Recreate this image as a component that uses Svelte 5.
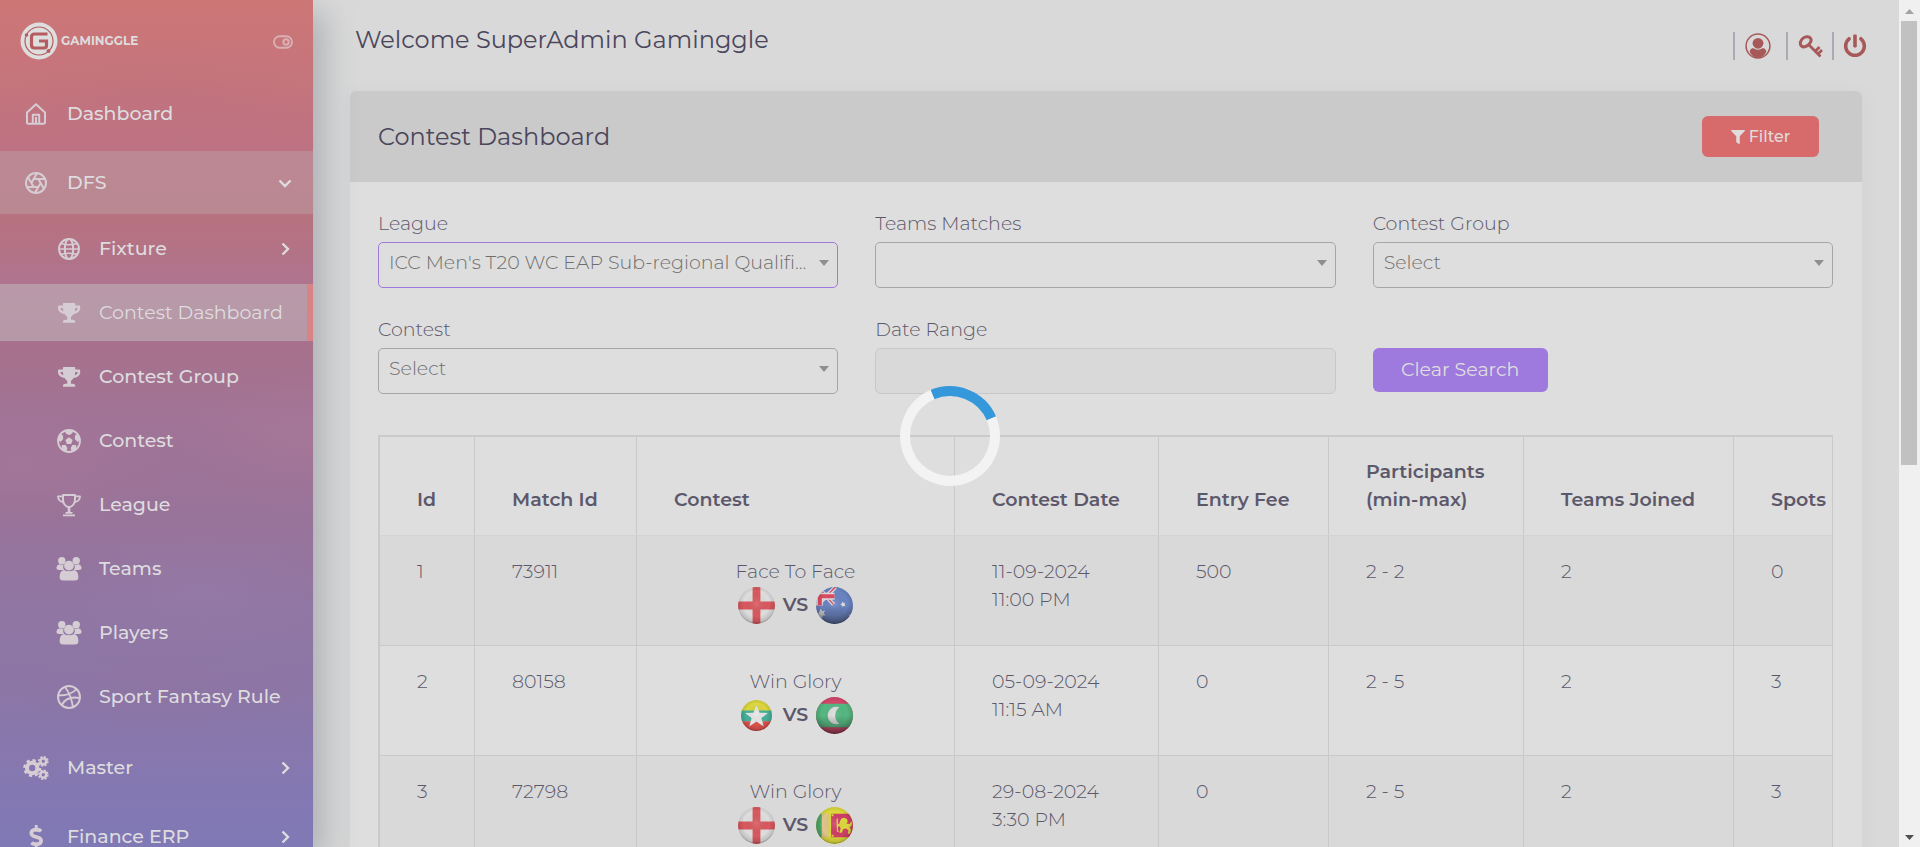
<script>
  const subItems = [
    { label: 'Fixture', icon: 'globe', arrow: true },
    { label: 'Contest Dashboard', icon: 'cup', active: true },
    { label: 'Contest Group', icon: 'cup' },
    { label: 'Contest', icon: 'ball' },
    { label: 'League', icon: 'trophy' },
    { label: 'Teams', icon: 'group' },
    { label: 'Players', icon: 'group' },
    { label: 'Sport Fantasy Rule', icon: 'dribbble' }
  ];

  const columns = [
    { label: 'Id', width: 95 },
    { label: 'Match Id', width: 162 },
    { label: 'Contest', width: 318 },
    { label: 'Contest Date', width: 204 },
    { label: 'Entry Fee', width: 170 },
    { label: 'Participants (min-max)', width: 195 },
    { label: 'Teams Joined', width: 210 },
    { label: 'Spots', width: 150 }
  ];

  const rows = [
    { id: 1, match: 73911, name: 'Face To Face', home: 'england', away: 'australia', date: '11-09-2024', time: '11:00 PM', fee: 500, range: '2 - 2', joined: 2, spots: 0 },
    { id: 2, match: 80158, name: 'Win Glory', home: 'myanmar', away: 'maldives', date: '05-09-2024', time: '11:15 AM', fee: 0, range: '2 - 5', joined: 2, spots: 3 },
    { id: 3, match: 72798, name: 'Win Glory', home: 'england', away: 'srilanka', date: '29-08-2024', time: '3:30 PM', fee: 0, range: '2 - 5', joined: 2, spots: 3 }
  ];
</script>

{#snippet icon(name)}
  <svg class="icon" viewBox="0 0 24 24" fill="none" stroke="currentColor" stroke-width="2" stroke-linejoin="round" aria-hidden="true">
    {#if name === 'home'}
      <path d="M3 10.500 12 2.300l9 8.200V20.500a1.200 1.200 0 0 1-1.200 1.200H4.200a1.200 1.200 0 0 1-1.200-1.200z" />
      <path d="M8.800 21.500v-8.700h6.400v8.700M12 15v6" />
    {:else if name === 'aperture'}
      <circle cx="12" cy="12" r="10" />
      <path d="M14.310 8l5.740 9.940M9.690 8h11.480M7.380 12l5.740-9.940M9.690 16 3.950 6.060M14.310 16H2.830M16.620 12l-5.740 9.940" />
    {:else if name === 'globe'}
      <circle cx="12" cy="12" r="10" />
      <ellipse cx="12" cy="12" rx="4.200" ry="10" />
      <path d="M2 12h20M4 6.500q8 2.500 16 0M4 17.500q8-2.500 16 0" stroke-width="1.600" />
    {:else if name === 'cup'}
      <g transform="translate(1 2) scale(.0385)" fill="currentColor" stroke="none">
        <path d="M552 64H448V24c0-13.300-10.700-24-24-24H152c-13.300 0-24 10.700-24 24v40H24C10.700 64 0 74.700 0 88v56c0 35.700 22.500 72.400 61.900 100.700 31.500 22.700 69.800 37.100 110 41.700C203.300 338.500 240 360 240 360v72h-48c-35.300 0-64 20.700-64 56v12c0 6.600 5.400 12 12 12h296c6.600 0 12-5.400 12-12v-12c0-35.300-28.700-56-64-56h-48v-72s36.700-21.500 68.100-73.600c40.300-4.600 78.600-19 110-41.700 39.300-28.300 61.900-65 61.900-100.700V88c0-13.300-10.700-24-24-24zM99.300 192.800C74.900 175.200 64 155.600 64 144v-16h64.200c1 32.600 5.800 61.200 12.800 86.200-15.100-5.200-29.200-12.400-41.700-21.400zM512 144c0 16.100-17.700 36.100-35.300 48.800-12.500 9-26.700 16.200-41.800 21.400 7-25 11.800-53.600 12.800-86.200H512v16z" />
      </g>
    {:else if name === 'ball'}
      <circle cx="12" cy="12" r="11" stroke-width="1.800" />
      <path fill="currentColor" stroke="none" d="M12 8.300l3.600 2.600-1.400 4.200H9.800l-1.400-4.200zM8 1.800h8l-.6 2.500L12 6.200 8.600 4.300zM1 9.800l2.200-5 2.800 1.600.2 3.700-3 3.100zM23 9.800l-2.200-5L18 6.400l-.2 3.700 3 3.100zM4.500 20.300l.3-4.300h3.900l1.700 3.200-1.200 3.400zM19.500 20.300l-.3-4.300h-3.900l-1.700 3.200 1.200 3.400z" />
    {:else if name === 'trophy'}
      <path d="M6 2h12v4.500c0 4-2.500 7.500-6 7.500s-6-3.500-6-7.500z" stroke-width="2" />
      <path d="M6 3.300H1c0 3.500 2.300 5.700 5.600 5.700M18 3.300h5c0 3.500-2.300 5.700-5.600 5.700M8.500 19.800h7M6 22.300h12" stroke-width="1.800" />
      <path d="M12 14v6" stroke-width="2.600" />
    {:else if name === 'group'}
      <g fill="currentColor" stroke="none">
        <circle cx="4.800" cy="3.800" r="3.700" />
        <circle cx="19.200" cy="3.800" r="3.700" />
        <path d="M2.500 7.200Q4.500 8.600 6.700 7.500C5.700 9.800 6.200 12 7.400 13H2.200Q-.6 13-.6 10.500 0 7.800 2.500 7.200zM21.500 7.200Q19.500 8.600 17.300 7.500C18.300 9.800 17.800 12 16.600 13h5.200q2.800 0 2.800-2.500-.6-2.700-3.100-3.300z" />
        <circle cx="12" cy="8.600" r="4.900" />
        <path d="M7 12.900q5 2.900 10 0 4.400 1.100 4.400 7.100 0 3.500-3.600 3.500H6.200Q2.600 23.500 2.600 20q0-6 4.400-7.100z" />
      </g>
    {:else if name === 'dribbble'}
      <circle cx="12" cy="12" r="11" stroke-width="1.900" />
      <path d="M8 2c3.500 4.500 6.500 11 8 20M1.200 10.500c7 0 14-1.200 18.300-6.500M22.800 13c-9-1.600-15 1-18 7" stroke-width="1.800" />
    {:else if name === 'cogs'}
      <circle cx="8.200" cy="12" r="5.200" stroke-width="4" />
      <circle cx="8.200" cy="12" r="7.600" stroke-width="2.800" stroke-dasharray="3.200 2.770" />
      <circle cx="19.300" cy="5.300" r="2.900" stroke-width="2.400" />
      <circle cx="19.300" cy="5.300" r="4.500" stroke-width="1.700" stroke-dasharray="2 1.530" />
      <circle cx="19.300" cy="18.700" r="2.900" stroke-width="2.400" />
      <circle cx="19.300" cy="18.700" r="4.500" stroke-width="1.700" stroke-dasharray="2 1.530" />
    {:else if name === 'dollar'}
      <g transform="translate(5.500 0) scale(.0468)" fill="currentColor" stroke="none">
        <path d="M209.200 233.400l-108-31.600C88.700 198.200 80 186.500 80 173.500c0-16.300 13.200-29.500 29.500-29.500h66.300c12.200 0 24.200 3.700 34.200 10.500 6.100 4.100 14.300 3.100 19.500-2l34.800-34c7.100-6.900 6.100-18.400-1.800-24.500C238 74.800 207.400 64.100 176 64V16c0-8.800-7.200-16-16-16h-32c-8.800 0-16 7.200-16 16v48h-2.500C45.800 64-5.400 118.700.5 183.600c4.200 46.100 39.400 83.600 83.800 96.600l102.500 30c12.500 3.700 21.200 15.300 21.200 28.300 0 16.300-13.200 29.500-29.500 29.500h-66.300C100 368 88 364.300 78 357.500c-6.100-4.100-14.300-3.100-19.500 2l-34.800 34c-7.100 6.900-6.100 18.400 1.800 24.500 24.500 19.200 55.100 29.900 86.500 30v48c0 8.800 7.200 16 16 16h32c8.800 0 16-7.200 16-16v-48.200c46.600-.9 90.300-28.600 105.700-72.700 21.500-61.600-14.600-124.800-72.500-141.700z" />
      </g>
    {/if}
  </svg>
{/snippet}

{#snippet chevron(dir)}
  <svg class="chevron" class:down={dir === 'down'} viewBox="0 0 14 14" fill="none" stroke="currentColor" stroke-width="2.400" aria-hidden="true">
    <path d="M4.500 1.500 10 7l-5.500 5.500" />
  </svg>
{/snippet}

{#snippet caret()}
  <svg class="caret" viewBox="0 0 10 6" aria-hidden="true"><path d="M0 0h10L5 6z" fill="#8f8f8f" /></svg>
{/snippet}

{#snippet flag(name)}
  <svg class="flag" class:small={name === 'myanmar'} viewBox="0 0 38 38" role="img" aria-label={name}>
    <g clip-path="url(#disc)">
      {#if name === 'england'}
        <path fill="#dedede" d="M0 0h38v38H0z" />
        <path fill="#d9595f" d="M15 0h8v38h-8zM0 15h38v8H0z" />
      {:else if name === 'australia'}
        <path fill="#6a84c4" d="M0 0h38v38H0z" />
        <path d="M2 0 18 18M2 18 20 0" stroke="#dedede" stroke-width="4" />
        <path d="M2 0 18 18M2 18 20 0" stroke="#d9536c" stroke-width="1.500" />
        <path fill="#dedede" d="M0 6h19v7H7v6H0z" />
        <path fill="#dc4b62" d="M0 7.500h19v4H6V19H2v-7.500H0z" />
        <path fill="#dedede" d="m5 22 1.300 3 3-.8-1.500 2.700L10 29l-3.200.3L6.200 33 4 30l-3 1.500 1-3.500zM27.500 15l1 1.400 1.600.2-.6 1.500.5 1.700-1.700-.3-1.500.8-.4-1.600-1.400-1 1.500-.8zM33.500 28l2 .5-1 3z" />
        <path fill="url(#dusk)" d="M0 0h38v38H0z" />
      {:else if name === 'myanmar'}
        <path fill="#dcd63e" d="M0 0h38v14H0z" />
        <path fill="#45b09a" d="M0 13h38v13H0z" />
        <path fill="#dc524c" d="M0 26h38v12H0z" />
        <path fill="#e6e6e6" d="m19 6 3.800 9.600 10.200.2-8 6.400 2.900 10.300-8.900-6-8.900 6L13 22.200 5 15.800l10.200-.2z" />
      {:else if name === 'maldives'}
        <path fill="#d2476a" d="M0 0h38v38H0z" />
        <path fill="#55b881" d="M0 7h38v24H0z" />
        <path fill="#dedede" d="M24 10.500a9 9 0 1 0 0 17 10.500 10.500 0 0 1 0-17z" />
        <path fill="url(#dusk)" d="M0 0h38v38H0z" />
      {:else}
        <path fill="#dcd93c" d="M0 0h38v38H0z" />
        <path fill="#4fa76c" d="M0 7h6v24H0z" />
        <path fill="#dfc48a" d="M6 7h7v24H6z" />
        <path fill="#cf3f68" d="M15.500 7H38v24H15.500z" />
        <path fill="#dcd93c" d="M16 7.500h2v2h-2zM16 28.500h2v2h-2zM25 13.500q1-2.500 4-2.500l3 1.500.5 3-1.500 1.500 3.500.5 1.500-2.500 1 .5-.5 4-2 1 1.500 3-1 4h-2.500l.8-3-2-2.500-3.300.5-1.500 4h-2.500l1.300-4.500-1.300-2.500-1.500 1-1-2 2.500-1.500zM21 13l1-2 .5 2v11l1.500 1.500h-2.500z" />
      {/if}
      <circle cx="19" cy="19" r="19" fill="url(#shade)" />
    </g>
  </svg>
{/snippet}

<svg class="defs" width="0" height="0" aria-hidden="true">
  <defs>
    <clipPath id="disc"><circle cx="19" cy="19" r="19" /></clipPath>
    <radialGradient id="shade" cx=".5" cy=".45" r=".56">
      <stop offset="0" stop-color="#fff" stop-opacity=".12" />
      <stop offset=".6" stop-color="#000" stop-opacity="0" />
      <stop offset=".88" stop-color="#000" stop-opacity=".14" />
      <stop offset="1" stop-color="#000" stop-opacity=".45" />
    </radialGradient>
    <linearGradient id="dusk" x2="0" y2="1">
      <stop offset=".5" stop-color="#222" stop-opacity="0" />
      <stop offset="1" stop-color="#222" stop-opacity=".45" />
    </linearGradient>
  </defs>
</svg>

<div class="app">
  <aside class="sidebar">
    <div class="brand">
      <svg class="mark" viewBox="0 0 38 38" aria-hidden="true">
        <circle cx="19" cy="19" r="18.500" fill="#dedede" />
        <circle cx="19" cy="19" r="14" fill="none" stroke="#b55c60" stroke-width="1.200" />
        <path d="M27.500 12H14.500Q11.500 12 11.500 15v8q0 3 3 3h9.500q2.500 0 2.500-2.500V19h-7.500" fill="none" stroke="#b55c60" stroke-width="3.200" />
        <circle cx="6.500" cy="13" r="1.800" fill="#b55c60" />
        <circle cx="28.500" cy="29" r="2" fill="#b55c60" />
      </svg>
      <span class="wordmark">GAMINGGLE</span>
      <button class="pin" type="button" aria-label="Toggle sidebar">
        <svg viewBox="0 0 20 14" fill="none" stroke="currentColor" aria-hidden="true">
          <rect x="1" y="1.200" width="18" height="11.600" rx="5.800" stroke-width="1.900" />
          <circle cx="13" cy="7" r="2.700" stroke-width="2" />
        </svg>
      </button>
    </div>
    <nav>
      <a class="item" href="#dashboard">{@render icon('home')}<span>Dashboard</span></a>
      <a class="item open" href="#dfs">{@render icon('aperture')}<span>DFS</span>{@render chevron('down')}</a>
      <div class="sub">
        {#each subItems as item}
          <a class="subitem" class:active={item.active} href="#sub">
            {@render icon(item.icon)}<span>{item.label}</span>
            {#if item.arrow}{@render chevron('right')}{/if}
          </a>
        {/each}
      </div>
      <a class="item" href="#master">{@render icon('cogs')}<span>Master</span>{@render chevron('right')}</a>
      <a class="item" href="#finance">{@render icon('dollar')}<span>Finance ERP</span>{@render chevron('right')}</a>
    </nav>
  </aside>

  <main>
    <header class="topbar">
      <h1>Welcome SuperAdmin Gaminggle</h1>
      <div class="tools">
        <button type="button" aria-label="Profile">
          <svg viewBox="0 0 26 26" aria-hidden="true">
            <circle cx="13" cy="13" r="11.900" fill="none" stroke="currentColor" stroke-width="1.500" />
            <circle cx="13" cy="10.300" r="5.400" fill="currentColor" />
            <path d="M4.500 18.500Q5.500 15.300 8 15q5 3.600 10 0 2.500.3 3.500 3.500-3 6.500-8.500 6.500t-8.500-6.500z" fill="currentColor" />
          </svg>
        </button>
        <button type="button" aria-label="Change password">
          <svg viewBox="0 0 26 26" fill="none" stroke="currentColor" stroke-width="3" aria-hidden="true">
            <path d="M2.500 11.500C1.500 8 5 4 8.500 3.800c4-.3 6 2.700 3.500 6.200C9.500 14 4 15.500 2.500 11.500z" />
            <path d="m11 12 11.500 11.500M17.500 18l4-4M20.500 20.500l3.500-3.500" stroke-width="2.800" />
          </svg>
        </button>
        <button type="button" aria-label="Log out">
          <svg viewBox="-34 -34 580 580" aria-hidden="true">
            <path fill="currentColor" d="M400 54.100c63 45 104 118.600 104 201.900 0 136.800-110.800 247.700-247.500 248C120 504.300 8.200 393 8 256.400 7.900 173.100 48.900 99.300 111.800 54.200c11.700-8.300 28-4.800 35 7.700L162.600 90c5.900 10.500 3.100 23.800-6.600 31-41.500 30.800-68 79.600-68 134.900-.1 92.300 74.500 168.100 168 168.100 91.600 0 168.600-74.200 168-169.100-.3-51.800-24.700-101.800-68.100-134-9.700-7.200-12.400-20.500-6.500-30.900l15.800-28.100c7-12.400 23.200-16.100 34.800-7.800zM296 264V24c0-13.300-10.700-24-24-24h-32c-13.300 0-24 10.700-24 24v240c0 13.300 10.700 24 24 24h32c13.300 0 24-10.700 24-24z" />
          </svg>
        </button>
      </div>
    </header>

    <section class="card">
      <div class="card-head">
        <h2>Contest Dashboard</h2>
        <button class="filter" type="button">
          <svg viewBox="0 0 512 512" aria-hidden="true"><path fill="currentColor" d="M487.976 0H24.028C2.710 0-8.047 25.866 7.058 40.971L192 225.941V432c0 7.831 3.821 15.170 10.237 19.662l80 55.980C298.020 518.690 320 507.493 320 487.980V225.941l184.947-184.970C520.021 25.896 509.338 0 487.976 0z" /></svg>
          Filter
        </button>
      </div>
      <div class="card-body">
        <form class="filters">
          <div class="field">
            <label for="league">League</label>
            <div class="control">
              <select id="league" class="focused"><option>ICC Men's T20 WC EAP Sub-regional Qualifi...</option></select>
              {@render caret()}
            </div>
          </div>
          <div class="field">
            <label for="matches">Teams Matches</label>
            <div class="control">
              <select id="matches"><option></option></select>
              {@render caret()}
            </div>
          </div>
          <div class="field">
            <label for="group">Contest Group</label>
            <div class="control">
              <select id="group"><option>Select</option></select>
              {@render caret()}
            </div>
          </div>
          <div class="field">
            <label for="contest">Contest</label>
            <div class="control">
              <select id="contest"><option>Select</option></select>
              {@render caret()}
            </div>
          </div>
          <div class="field">
            <label for="range">Date Range</label>
            <input id="range" type="text" disabled />
          </div>
          <div class="field end">
            <button class="clear" type="button">Clear Search</button>
          </div>
        </form>

        <div class="table-wrap">
          <table>
            <colgroup>
              {#each columns as col}<col style="width: {col.width}px" />{/each}
            </colgroup>
            <thead>
              <tr>{#each columns as col}<th>{col.label}</th>{/each}</tr>
            </thead>
            <tbody>
              {#each rows as row}
                <tr>
                  <td>{row.id}</td>
                  <td>{row.match}</td>
                  <td class="contest">
                    {row.name}
                    <div class="versus">{@render flag(row.home)}<strong>VS</strong>{@render flag(row.away)}</div>
                  </td>
                  <td>{row.date}<br />{row.time}</td>
                  <td>{row.fee}</td>
                  <td>{row.range}</td>
                  <td>{row.joined}</td>
                  <td>{row.spots}</td>
                </tr>
              {/each}
            </tbody>
          </table>
        </div>
      </div>
    </section>
  </main>

  <div class="scrollbar" aria-hidden="true">
    <svg viewBox="0 0 9 5"><path d="M0 5h9L4.500 0z" fill="#a3a3a3" /></svg>
    <div class="thumb"></div>
    <div class="rest"></div>
    <svg viewBox="0 0 9 5"><path d="M0 0h9L4.500 5z" fill="#505050" /></svg>
  </div>

  <div class="loading" role="status" aria-label="Loading"><div class="spinner"></div></div>
</div>

<style>
  :global(body) {
    margin: 0;
    background: #d9d9d9;
  }
  .app {
    display: flex;
    height: 100vh;
    overflow: hidden;
    font-family: Montserrat, Inter, sans-serif;
    font-size: 19px;
    font-weight: 300;
    line-height: 28px;
    color: #5c586b;
  }
  .app :global(*) {
    box-sizing: border-box;
  }
  .defs {
    position: absolute;
  }
  button,
  select,
  input {
    font: inherit;
    color: inherit;
    margin: 0;
  }
  button {
    border: 0;
    background: none;
    padding: 0;
  }
  svg {
    display: block;
    flex: none;
  }

  .sidebar {
    flex: none;
    width: 313px;
    z-index: 2;
    color: #dedcdf;
    font-weight: 500;
    background:
      radial-gradient(ellipse 150px 60px at 160px 96px, rgba(180, 110, 130, 0.2), transparent),
      radial-gradient(ellipse 120px 70px at 300px 440px, rgba(180, 125, 150, 0.25), transparent),
      radial-gradient(ellipse 160px 60px at 20px 470px, rgba(180, 125, 150, 0.25), transparent),
      radial-gradient(ellipse 120px 60px at 200px 590px, rgba(155, 130, 175, 0.3), transparent),
      radial-gradient(ellipse 140px 60px at 160px 690px, rgba(145, 110, 155, 0.2), transparent),
      linear-gradient(#cd7676 0, #c5757c 80px, #bd7282 145px, #b7727f 220px, #ae7490 290px, #a6718c 350px, #a17497 420px, #98739a 520px, #9076a3 610px, #8c76a6 690px, #8478b2 790px, #7f79b5 847px);
    box-shadow: 10px 12px 30px rgba(85, 95, 110, 0.35);
  }
  .brand {
    display: flex;
    align-items: center;
    height: 82px;
    padding: 0 20px;
  }
  .mark {
    width: 38px;
    height: 38px;
  }
  .wordmark {
    margin-left: 3px;
    font-size: 12px;
    font-weight: 700;
  }
  .pin {
    margin-left: auto;
    padding-top: 2px;
    color: #d9b0b4;
  }
  .pin svg {
    width: 20px;
    height: 14px;
  }
  nav {
    display: flex;
    flex-direction: column;
    gap: 6px;
  }
  .item,
  .subitem {
    display: flex;
    align-items: center;
    color: inherit;
    text-decoration: none;
  }
  .item {
    height: 63px;
    padding: 0 21px 0 24px;
    gap: 19px;
  }
  .open {
    background: rgba(190, 190, 190, 0.3);
  }
  .sub {
    display: flex;
    flex-direction: column;
    gap: 7px;
    padding-bottom: 5px;
  }
  .subitem {
    height: 57px;
    padding: 0 21px 0 57px;
    gap: 18px;
  }
  .active {
    background: rgba(198, 198, 198, 0.46);
    border-right: 6px solid #d98484;
    font-weight: 400;
  }
  .icon {
    width: 24px;
    height: 24px;
    color: #d6cdd4;
    overflow: visible;
  }
  .chevron {
    width: 14px;
    height: 14px;
    margin-left: auto;
  }
  .down {
    transform: rotate(90deg);
  }

  main {
    flex: 1;
    min-width: 0;
    padding: 0 37px;
  }
  .topbar {
    display: flex;
    justify-content: space-between;
    align-items: flex-start;
    height: 91px;
    padding: 25px 0 0 5px;
  }
  h1,
  h2 {
    margin: 0;
    font-size: 24px;
    font-weight: 400;
    line-height: 30px;
    color: #4b465c;
  }
  .tools {
    display: flex;
    padding-top: 7px;
    color: #a75858;
  }
  .tools button {
    border-left: 2px solid #a9aab2;
    height: 28px;
    padding: 0 8px 0 10px;
  }
  .tools button:first-child {
    padding: 0 15px 0 10px;
  }
  .tools button:last-child {
    padding: 0 0 0 8px;
    margin-right: -6px;
  }
  .tools svg {
    width: 26px;
    height: 26px;
  }

  .card {
    border-radius: 6px;
    background: #dedede;
    box-shadow: 0 4px 18px rgba(120, 125, 140, 0.08);
  }
  .card-head {
    display: flex;
    align-items: center;
    justify-content: space-between;
    height: 91px;
    padding: 0 43px 0 28px;
    background: #cacaca;
    border-radius: 6px 6px 0 0;
  }
  .filter {
    display: flex;
    align-items: center;
    justify-content: center;
    gap: 4px;
    width: 117px;
    height: 41px;
    border-radius: 6px;
    background: #d76b6b;
    color: #e0dcdc;
    font-size: 16px;
    font-weight: 500;
  }
  .filter svg {
    width: 14px;
    height: 14px;
  }
  .card-body {
    padding: 28px 29px 28px 28px;
  }
  .filters {
    display: grid;
    grid-template-columns: repeat(3, minmax(0, 1fr));
    gap: 28px 37px;
  }
  .field {
    display: flex;
    flex-direction: column;
    gap: 4px;
  }
  .end {
    justify-content: flex-end;
    align-items: flex-start;
    padding-bottom: 2px;
  }
  .control {
    position: relative;
  }
  select,
  input {
    display: block;
    width: 100%;
    height: 46px;
    padding: 0 30px 4px 10px;
    border: 1px solid #a6a6a6;
    border-radius: 5px;
    background: #dedede;
    color: #6e6e6e;
    appearance: none;
    outline: 0;
  }
  .focused {
    border-color: #9e79de;
  }
  input:disabled {
    background: #d9d9d9;
    border-color: #c8c8c8;
    border-radius: 6px;
  }
  .caret {
    position: absolute;
    top: 18px;
    right: 9px;
    width: 10px;
    height: 6px;
    pointer-events: none;
  }
  .clear {
    width: 175px;
    height: 44px;
    border-radius: 6px;
    background: #9e7ade;
    color: #dedede;
    font-weight: 400;
  }

  .table-wrap {
    margin-top: 41px;
    overflow: hidden;
    border: solid #cacaca;
    border-width: 2px 1px 0 1px;
  }
  table {
    width: 1504px;
    table-layout: fixed;
    border-collapse: collapse;
  }
  th,
  td {
    padding: 22px 30px 21px 37px;
    text-align: left;
    border: 1px solid #c9c9c9;
  }
  th {
    padding-top: 21px;
    border-top: 0;
    border-bottom-color: #d3d3d3;
    vertical-align: bottom;
    font-weight: 600;
  }
  td {
    height: 110px;
    padding-bottom: 15px;
    vertical-align: top;
  }
  tbody tr:nth-child(odd) {
    background: #d9d9d9;
  }
  .contest {
    padding-right: 37px;
    text-align: center;
  }
  .versus {
    display: flex;
    align-items: center;
    justify-content: center;
    height: 38px;
  }
  .versus strong {
    width: 41px;
    font-weight: 600;
  }
  .flag {
    width: 37px;
    height: 37px;
  }
  .small {
    width: 31px;
    height: 31px;
    margin: 0 3px;
  }

  .scrollbar {
    flex: none;
    display: flex;
    flex-direction: column;
    align-items: center;
    gap: 7px;
    width: 21px;
    padding: 9px 3px 7px 2px;
    background: #f0f0f0;
  }
  .scrollbar svg {
    width: 9px;
    height: 5px;
  }
  .thumb {
    flex: 5;
    width: 100%;
    background: #c1c1c1;
  }
  .rest {
    flex: 4;
  }

  .loading {
    position: fixed;
    inset: 0 21px 0 0;
    z-index: 5;
    display: grid;
    place-items: center;
    padding-top: 24px;
    pointer-events: none;
  }
  .spinner {
    width: 100px;
    height: 100px;
    border: 10px solid #f3f3f3;
    border-top-color: #3498db;
    border-radius: 50%;
    transform: rotate(22deg);
  }
</style>
